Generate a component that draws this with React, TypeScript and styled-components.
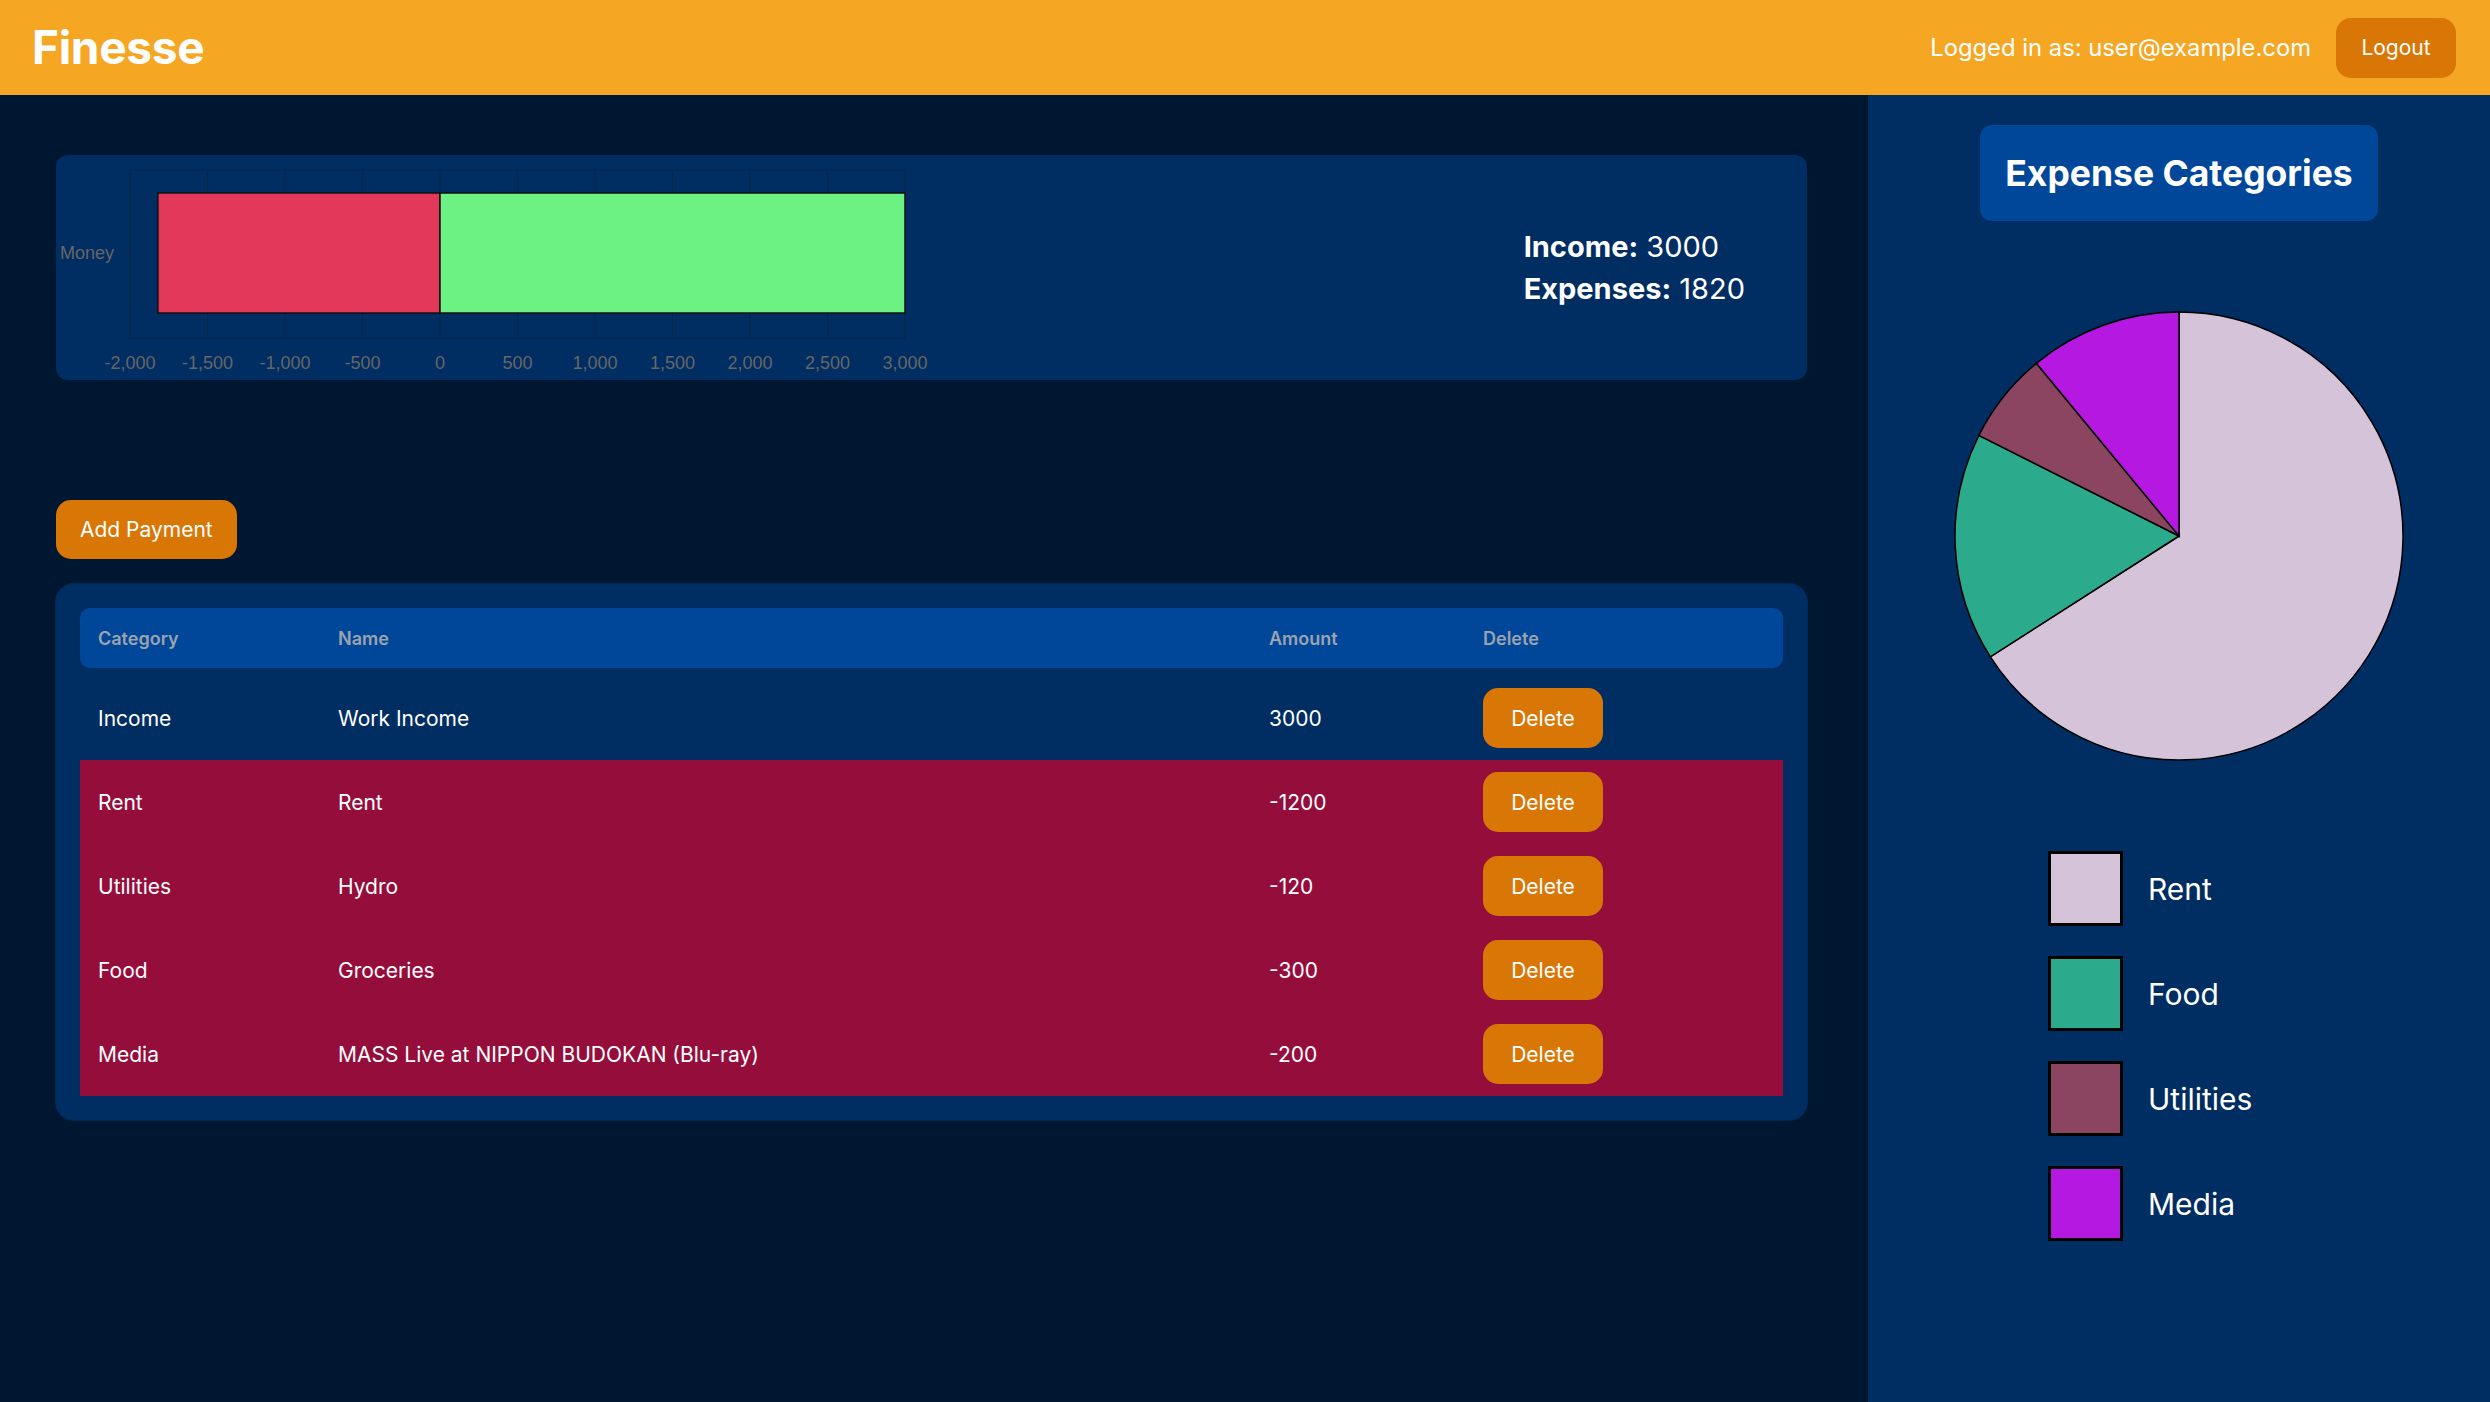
import React from 'react'
import styled, { createGlobalStyle } from 'styled-components'

const GlobalStyle = createGlobalStyle`
  * { box-sizing: border-box; }
  body {
    margin: 0;
    background: #001731;
    font-family: Inter, "Noto Sans", sans-serif;
    color: #fff;
  }
`

const Page = styled.div`
  min-height: 1402px;
  display: flex;
  flex-direction: column;
`

const TopBar = styled.header`
  height: 95px;
  flex-shrink: 0;
  background: #f5a623;
  display: flex;
  align-items: center;
  justify-content: space-between;
  padding: 0 34px 0 32px;
`

const Brand = styled.div`
  font-size: 46px;
  font-weight: 700;
  letter-spacing: -0.3px;
  margin-top: -2px;
`

const UserArea = styled.div`
  display: flex;
  align-items: center;
  gap: 25px;
  font-size: 23.8px;
`

const OrangeButton = styled.button<{ $w?: number; $h?: number }>`
  width: ${p => (p.$w ? `${p.$w}px` : 'auto')};
  height: ${p => p.$h || 60}px;
  padding: 0 24px;
  border: none;
  border-radius: 15px;
  background: #d97706;
  color: #fff;
  font-family: inherit;
  font-size: 21px;
  cursor: pointer;
`

const Main = styled.main`
  flex: 1;
  display: grid;
  grid-template-columns: 1868px 1fr;
`

const LeftCol = styled.section`
  padding: 60px 61px 40px 56px;
  display: flex;
  flex-direction: column;
  align-items: flex-start;
`

const Card = styled.div`
  width: 100%;
  background: #002d62;
  border-radius: 12px;
`

const ChartCard = styled(Card)`
  height: 225px;
  display: flex;
  align-items: center;
`

const Summary = styled.div`
  margin-left: auto;
  padding-right: 62px;
  font-size: 29px;
  line-height: 42px;

  b { font-weight: 700; }
`

const AddButton = styled(OrangeButton)`
  margin-top: 120px;
`

const TableCard = styled(Card)`
  margin-top: 25px;
  padding: 24px;
  border-radius: 18px;
  box-shadow: 0 0 0 1px rgba(0, 60, 130, 0.5);
`

const Row = styled.div<{ $kind: 'head' | 'income' | 'expense' }>`
  display: grid;
  grid-template-columns: 240px 931px 214px 1fr;
  align-items: center;
  height: ${p => (p.$kind === 'head' ? 60 : 84)}px;
  margin-bottom: ${p => (p.$kind === 'head' ? 8 : 0)}px;
  border-radius: ${p => (p.$kind === 'head' ? 10 : 0)}px;
  background: ${p =>
    p.$kind === 'head' ? '#00479a' : p.$kind === 'expense' ? '#950d3b' : 'transparent'};
  color: ${p => (p.$kind === 'head' ? '#9ca3af' : '#fff')};
  font-size: ${p => (p.$kind === 'head' ? 18 : 21)}px;
  font-weight: ${p => (p.$kind === 'head' ? 600 : 400)};
`

const Cell = styled.div`
  padding-left: 18px;
  white-space: nowrap;
`

const RightCol = styled.aside`
  background: #002d62;
  display: flex;
  flex-direction: column;
  align-items: center;
  padding-top: 30px;
`

const PanelTitle = styled.h2`
  margin: 0;
  height: 96px;
  padding: 0 25px;
  display: flex;
  align-items: center;
  background: #00479a;
  border-radius: 12px;
  font-size: 35.5px;
  font-weight: 700;
`

const PieWrap = styled.svg`
  margin-top: 90px;
  display: block;
`

const Legend = styled.ul`
  list-style: none;
  margin: 90px 0 0;
  padding: 0;
  width: 262px;
  display: flex;
  flex-direction: column;
  gap: 30px;
`

const LegendItem = styled.li`
  display: flex;
  align-items: center;
  gap: 25px;
  font-size: 30px;
`

const Swatch = styled.span<{ $color: string }>`
  width: 75px;
  height: 75px;
  border: 3px solid #000;
  background: ${p => p.$color};
`

const payments = [
  { category: 'Income', name: 'Work Income', amount: 3000 },
  { category: 'Rent', name: 'Rent', amount: -1200 },
  { category: 'Utilities', name: 'Hydro', amount: -120 },
  { category: 'Food', name: 'Groceries', amount: -300 },
  { category: 'Media', name: 'MASS Live at NIPPON BUDOKAN (Blu-ray)', amount: -200 },
]

const categories = [
  { name: 'Rent', color: '#d5c3d9', value: 1200 },
  { name: 'Food', color: '#2baa8c', value: 300 },
  { name: 'Utilities', color: '#8b4560', value: 120 },
  { name: 'Media', color: '#b518e0', value: 200 },
]

const income = 3000
const expenses = 1820

// x scale for the bar chart: -2000 .. 3000
const sx = (v: number) => 384 + v * 0.155
const ticks = [-2000, -1500, -1000, -500, 0, 500, 1000, 1500, 2000, 2500, 3000]

const MoneyChart = () => (
  <svg width={880} height={225} style={{ fontFamily: '"Liberation Sans", Arial, sans-serif' }}>
    <g stroke="#0a2448" strokeWidth={1}>
      {ticks.map(t => (
        <line key={t} x1={sx(t)} x2={sx(t)} y1={15} y2={183} />
      ))}
      <line x1={74} x2={sx(3000)} y1={15} y2={15} />
      <line x1={74} x2={sx(3000)} y1={183} y2={183} />
    </g>
    <rect x={sx(-expenses)} y={38} width={sx(0) - sx(-expenses)} height={120} fill="#e3385a" stroke="#111" strokeWidth={1.5} />
    <rect x={sx(0)} y={38} width={sx(income) - sx(0)} height={120} fill="#6cf283" stroke="#111" strokeWidth={1.5} />
    <text x={58} y={99} fill="#666" fontSize={18} textAnchor="end" dominantBaseline="middle">Money</text>
    {ticks.map(t => (
      <text key={t} x={sx(t)} y={209} fill="#666" fontSize={18} textAnchor="middle" dominantBaseline="middle">
        {t.toLocaleString('en-US')}
      </text>
    ))}
  </svg>
)

const R = 224
const C = 225

const slicePath = (a: number, b: number) => {
  const a0 = a * 2 * Math.PI
  const a1 = b * 2 * Math.PI
  const x0 = C + R * Math.sin(a0)
  const y0 = C - R * Math.cos(a0)
  const x1 = C + R * Math.sin(a1)
  const y1 = C - R * Math.cos(a1)
  const large = b - a > 0.5 ? 1 : 0
  return `M ${C} ${C} L ${x0} ${y0} A ${R} ${R} 0 ${large} 1 ${x1} ${y1} Z`
}

const PieChart = () => {
  const total = categories.reduce((s, c) => s + c.value, 0)
  let acc = 0
  return (
    <PieWrap width={450} height={450}>
      {categories.map(c => {
        const start = acc / total
        acc += c.value
        return <path key={c.name} d={slicePath(start, acc / total)} fill={c.color} stroke="#000" strokeWidth={1.5} />
      })}
    </PieWrap>
  )
}

const App: React.FC = () => {
  return (
    <>
      <GlobalStyle />
      <Page>
        <TopBar>
          <Brand>Finesse</Brand>
          <UserArea>
            <span>Logged in as: user@example.com</span>
            <OrangeButton $w={120}>Logout</OrangeButton>
          </UserArea>
        </TopBar>
        <Main>
          <LeftCol>
            <ChartCard>
              <MoneyChart />
              <Summary>
                <div><b>Income:</b> {income}</div>
                <div><b>Expenses:</b> {expenses}</div>
              </Summary>
            </ChartCard>

            <AddButton $h={59}>Add Payment</AddButton>

            <TableCard>
              <Row $kind="head">
                <Cell>Category</Cell>
                <Cell>Name</Cell>
                <Cell>Amount</Cell>
                <Cell>Delete</Cell>
              </Row>
              {payments.map(p => (
                <Row key={p.name} $kind={p.amount < 0 ? 'expense' : 'income'}>
                  <Cell>{p.category}</Cell>
                  <Cell>{p.name}</Cell>
                  <Cell>{p.amount}</Cell>
                  <Cell>
                    <OrangeButton $w={120}>Delete</OrangeButton>
                  </Cell>
                </Row>
              ))}
            </TableCard>
          </LeftCol>

          <RightCol>
            <PanelTitle>Expense Categories</PanelTitle>
            <PieChart />
            <Legend>
              {categories.map(c => (
                <LegendItem key={c.name}>
                  <Swatch $color={c.color} />
                  {c.name}
                </LegendItem>
              ))}
            </Legend>
          </RightCol>
        </Main>
      </Page>
    </>
  )
}

export default App
